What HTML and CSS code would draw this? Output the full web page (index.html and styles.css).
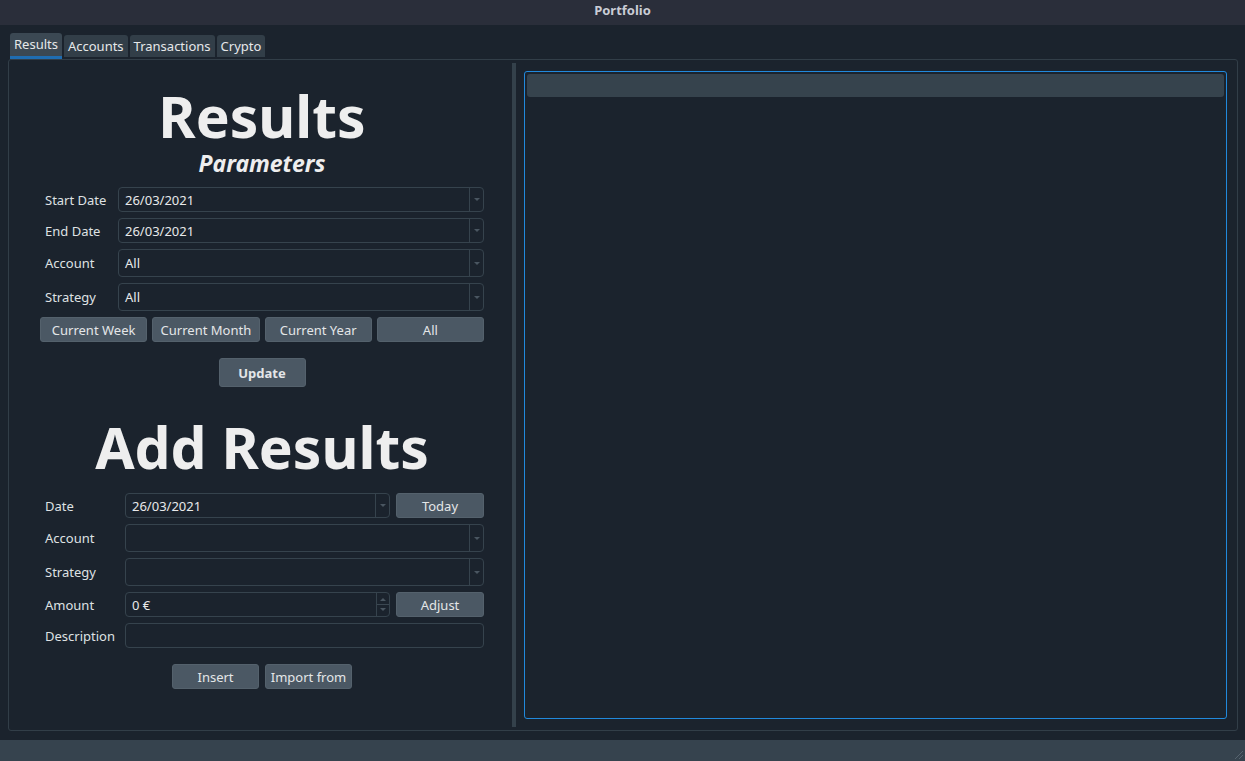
FILE: index.html
```html
<!DOCTYPE html>
<html>
<head>
<meta charset="utf-8">
<title>Portfolio</title>
<link rel="stylesheet" href="styles.css">
</head>
<body>
<div class="window">
  <div class="titlebar">Portfolio</div>
  <div class="main">
    <div class="tabbar">
      <div class="tab active">Results</div>
      <div class="tab">Accounts</div>
      <div class="tab">Transactions</div>
      <div class="tab">Crypto</div>
    </div>
    <div class="pane">
      <div class="left">
        <h1 class="big first">Results</h1>
        <h2 class="sub">Parameters</h2>
        <div class="form f1">
          <label>Start Date</label>
          <div class="field combo h25"><span>26/03/2021</span><i class="drop"></i></div>
          <label>End Date</label>
          <div class="field combo h25"><span>26/03/2021</span><i class="drop"></i></div>
          <label>Account</label>
          <div class="field combo h28"><span>All</span><i class="drop"></i></div>
          <label>Strategy</label>
          <div class="field combo h28"><span>All</span><i class="drop"></i></div>
        </div>
        <div class="range">
          <button class="btn">Current Week</button>
          <button class="btn">Current Month</button>
          <button class="btn">Current Year</button>
          <button class="btn">All</button>
        </div>
        <div class="center"><button class="btn update">Update</button></div>

        <h1 class="big second">Add Results</h1>
        <div class="form f2">
          <label>Date</label>
          <div class="rowpair">
            <div class="field combo h25 grow"><span>26/03/2021</span><i class="drop"></i></div>
            <button class="btn side">Today</button>
          </div>
          <label>Account</label>
          <div class="field combo h28"><span></span><i class="drop"></i></div>
          <label>Strategy</label>
          <div class="field combo h28"><span></span><i class="drop"></i></div>
          <label>Amount</label>
          <div class="rowpair">
            <div class="field spin h25 grow"><span>0 €</span>
              <i class="spinbox">
                <svg width="12" height="23" viewBox="0 0 12 23"><path d="M3 8 L6 5 L9 8 Z" fill="#4a5661"/><line x1="0" y1="11.5" x2="12" y2="11.5" stroke="#3b4751"/><path d="M3 15 L6 18 L9 15 Z" fill="#4a5661"/></svg>
              </i>
            </div>
            <button class="btn side">Adjust</button>
          </div>
          <label>Description</label>
          <div class="field h25"><span></span></div>
        </div>
        <div class="center actions">
          <button class="btn">Insert</button>
          <button class="btn">Import from</button>
        </div>
      </div>
      <div class="splitter"></div>
      <div class="right">
        <div class="view">
          <div class="viewhead"></div>
        </div>
      </div>
    </div>
  </div>
  <div class="statusbar">
    <svg class="grip" width="12" height="12" viewBox="0 0 12 12"><path d="M11 3 L3 11 M11 7 L7 11" stroke="#56636e" stroke-width="1"/></svg>
  </div>
</div>
</body>
</html>
```
FILE: styles.css
```css
* { box-sizing: border-box; }
html, body { margin: 0; padding: 0; }
body {
  background: #1b232d;
  font-family: "Noto Sans", "Open Sans", sans-serif;
  font-size: 13px;
  color: #e3e5e7;
  width: 1245px;
  height: 761px;
  overflow: hidden;
}
.window { display: flex; flex-direction: column; height: 761px; }
.titlebar {
  height: 25px;
  background: #2a2e3a;
  color: #c9ccd5;
  font-weight: bold;
  text-align: center;
  line-height: 20px;
  font-size: 13px;
}
.main { padding: 8px 7px 0 8px; }
.tabbar { display: flex; gap: 2px; padding-left: 2px; height: 26px; align-items: flex-start; }
.tab {
  height: 22px;
  margin-top: 2px;
  padding: 0 4px;
  background: #323e48;
  border-radius: 3px 3px 0 0;
  line-height: 22px;
  color: #e6e8ea;
}
.tab.active {
  height: 26px;
  margin-top: 0;
  background: #3b4853;
  border-bottom: 3px solid #1f6db2;
  line-height: 23px;
}
.pane {
  height: 672px;
  border: 1px solid #323e48;
  border-radius: 3px;
  display: flex;
}
.left {
  width: 502px;
  padding: 0 27px 0 31px;
  display: flex;
  flex-direction: column;
}
.big {
  margin: 0;
  font-size: 57px;
  line-height: 57px;
  font-weight: bold;
  text-align: center;
  color: #eeeeee;
}
.big.first { margin-top: 28px; }
.big.second { margin-top: 32px; }
.sub {
  margin: 7px 0 0;
  font-size: 23px;
  line-height: 23px;
  font-weight: bold;
  font-style: italic;
  text-align: center;
  color: #eeeeee;
}
.form {
  display: grid;
  row-gap: 6px;
  align-items: center;
  padding-left: 5px;
}
.f1 { grid-template-columns: 73px 1fr; margin-top: 12px; }
.f2 { grid-template-columns: 80px 1fr; margin-top: 17px; }
.form label { color: #dfe1e3; white-space: nowrap; }
.field {
  border: 1px solid #36434d;
  border-radius: 4px;
  display: flex;
  align-items: stretch;
  color: #e8e9ea;
}
.field span { flex: 1; padding-left: 6px; display: flex; align-items: center; }
.h25 { height: 25px; }
.h28 { height: 28px; }
.grow { flex: 1; }
.drop {
  width: 14px;
  border-left: 1px solid #36434d;
  display: flex;
  align-items: center;
  justify-content: center;
}
.drop::after {
  content: "";
  border-left: 3.5px solid transparent;
  border-right: 3.5px solid transparent;
  border-top: 3px solid #4a5661;
}
.spinbox { width: 13px; border-left: 1px solid #36434d; display: flex; }
.rowpair { display: flex; gap: 6px; }
.btn {
  font-family: inherit;
  font-size: 13px;
  color: #e4e6e8;
  background: #4b5864;
  border: 1px solid #54616c;
  border-radius: 3px;
  height: 25px;
  padding: 0;
}
.btn.side { width: 88px; }
.range { display: flex; gap: 5px; margin-top: 6px; }
.range .btn { flex: 1; }
.center { display: flex; justify-content: center; gap: 6px; }
.update { width: 87px; height: 29px; font-weight: bold; margin-top: 16px; }
.actions { margin-top: 16px; }
.actions .btn { width: 87px; }
.splitter {
  width: 4px;
  margin: 3px 0 3px 1px;
  background: #34414b;
}
.right { flex: 1; padding: 11px 10px 11px 8px; display: flex; }
.view {
  flex: 1;
  border: 1px solid #2189dc;
  border-radius: 3px;
  padding: 2px;
}
.viewhead { height: 23px; background: #36434d; border-radius: 3px; }
.statusbar {
  margin-top: 9px;
  height: 21px;
  background: #36434e;
  position: relative;
}
.grip { position: absolute; right: 1px; bottom: 1px; }
```
